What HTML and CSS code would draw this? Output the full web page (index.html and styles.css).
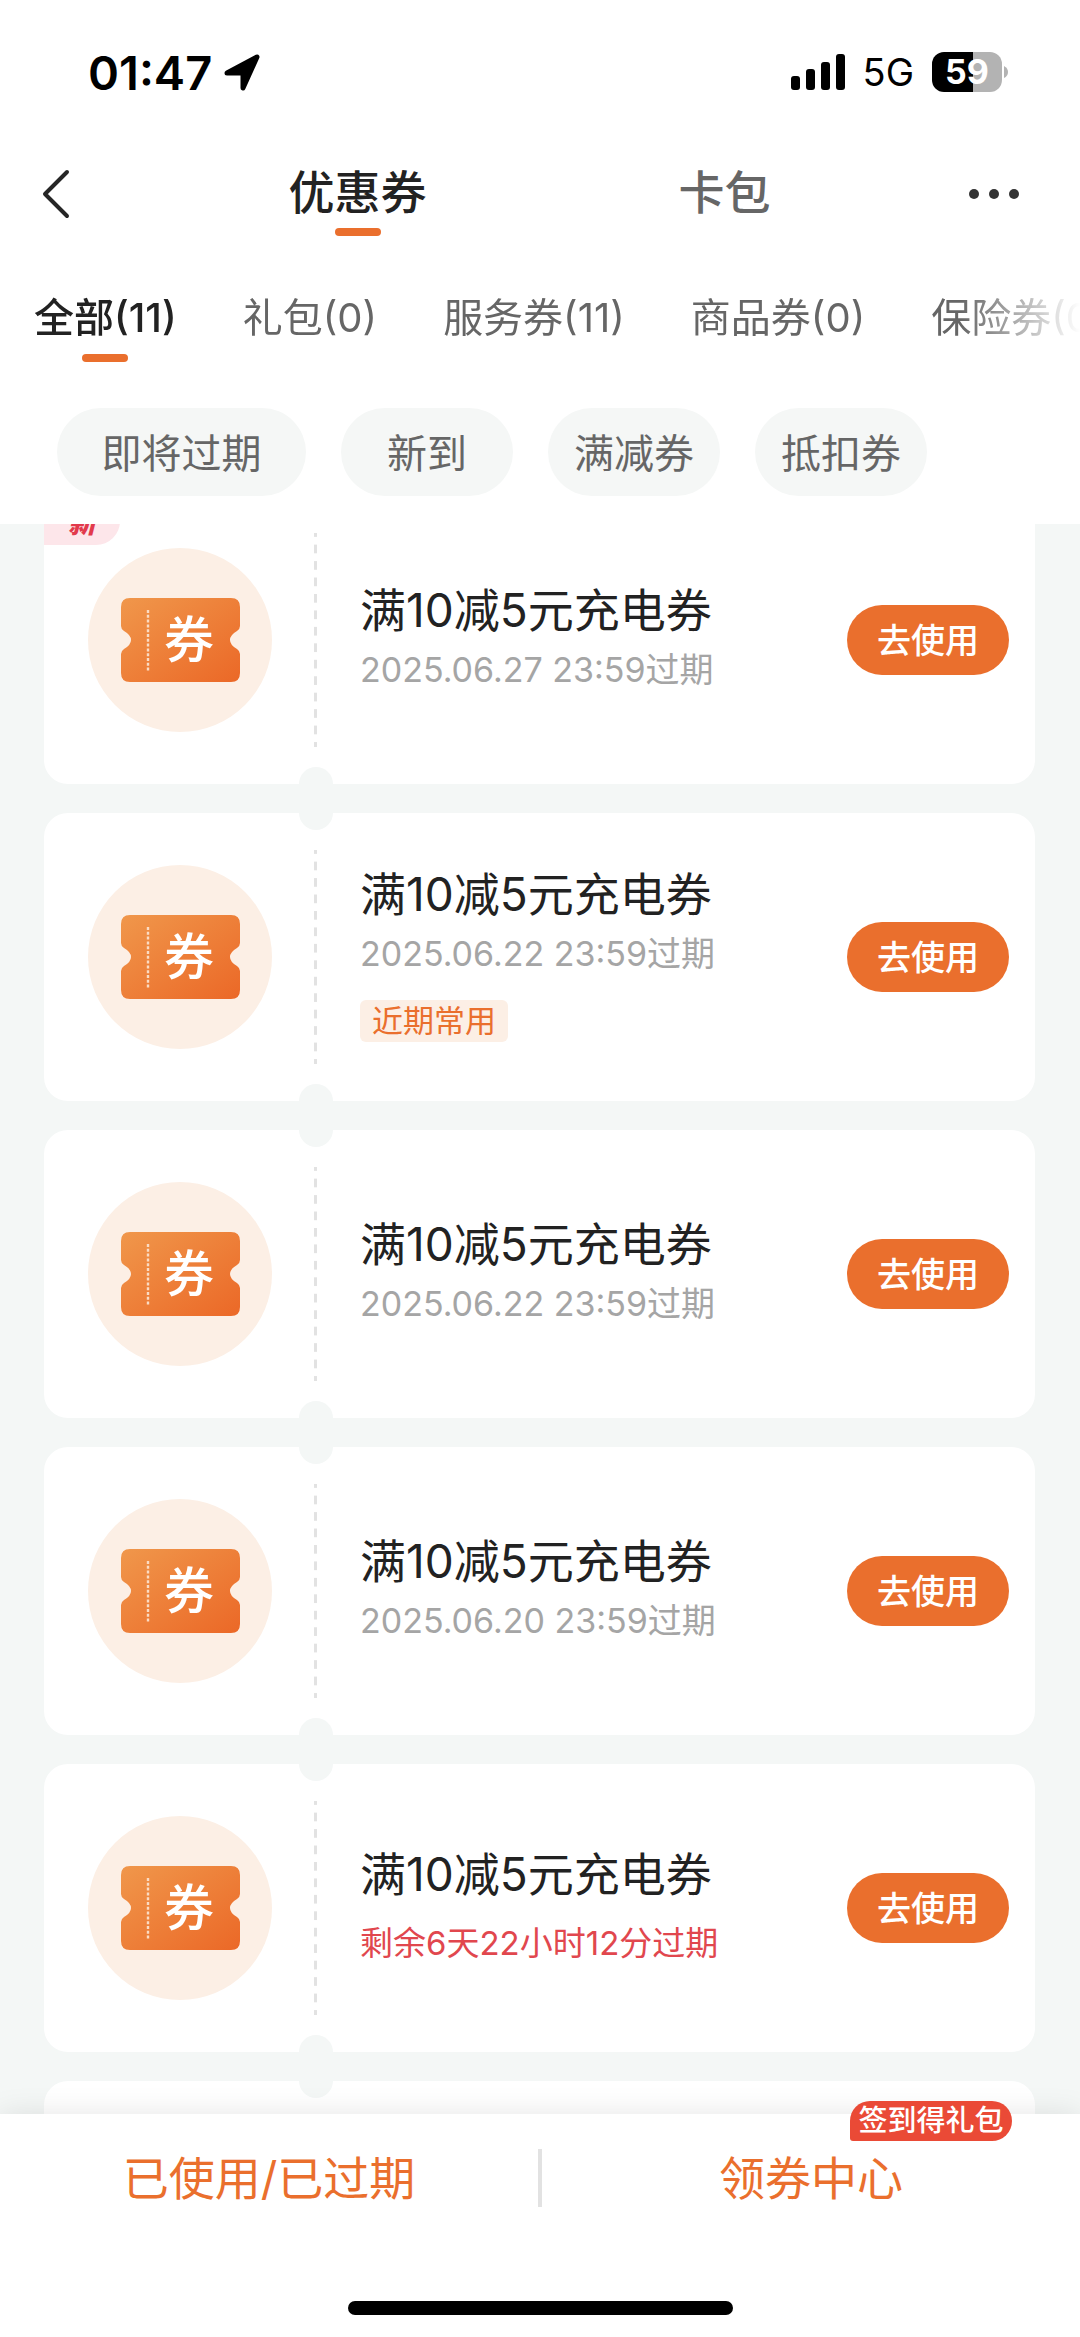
FILE: index.html
```html
<!DOCTYPE html>
<html lang="zh-CN">
<head>
<meta charset="utf-8">
<meta name="viewport" content="width=device-width, initial-scale=1">
<title>优惠券</title>
<link rel="stylesheet" href="styles.css">
</head>
<body>
<svg class="defs" aria-hidden="true">
  <defs>
    <linearGradient id="ticket-fill" x1="0" y1="0" x2="1" y2="1">
      <stop offset="0" stop-color="#f0974b"/>
      <stop offset="1" stop-color="#eb6827"/>
    </linearGradient>
    <symbol id="ticket" viewBox="0 0 119 84">
      <path fill="url(#ticket-fill)" d="M9 0H110Q119 0 119 9V28Q119 31 116 33Q109 37 109 42Q109 47 116 51Q119 53 119 56V75Q119 84 110 84H9Q0 84 0 75V56Q0 53 3 51Q10 47 10 42Q10 37 3 33Q0 31 0 28V9Q0 0 9 0Z"/>
      <path d="M27 12V73" stroke="#fbdcc4" stroke-width="2.4" stroke-dasharray="3 1.8"/>
    </symbol>
  </defs>
</svg>

<div class="status">
  <div class="status-left">
    <span class="clock">01:47</span>
    <svg width="37" height="37" viewBox="0 0 37 37" aria-hidden="true"><path d="M33 3L19 34V19H3Z" stroke="#000" stroke-width="5" stroke-linejoin="round"/></svg>
  </div>
  <div class="status-right">
    <svg width="54" height="36" viewBox="0 0 54 36" aria-hidden="true"><rect y="22" width="9" height="14" rx="3"/><rect x="15" y="15" width="9" height="21" rx="3"/><rect x="30" y="8" width="9" height="28" rx="3"/><rect x="45" width="9" height="36" rx="3"/></svg>
    <span class="network">5G</span>
    <span class="battery"><span class="battery-body">59</span><svg width="4" height="12" viewBox="0 0 4 12" aria-hidden="true"><path d="M0 0Q4 2 4 6T0 12Z" fill="#b3b3b3"/></svg></span>
  </div>
</div>

<header class="nav">
  <button class="icon-button back" aria-label="返回"><svg width="28" height="50" viewBox="0 0 28 50" aria-hidden="true"><path d="M25 3L3 25L25 47" fill="none" stroke="#262626" stroke-width="4" stroke-linecap="round" stroke-linejoin="round"/></svg></button>
  <a class="nav-tab active" href="#coupons">优惠券</a>
  <a class="nav-tab" href="#cards">卡包</a>
  <button class="icon-button more" aria-label="更多"><svg width="52" height="12" viewBox="0 0 52 12" aria-hidden="true" fill="#333"><circle cx="6" cy="6" r="5"/><circle cx="26" cy="6" r="5"/><circle cx="46" cy="6" r="5"/></svg></button>
</header>

<nav class="tabs">
  <a class="tab active" href="#all">全部(11)</a>
  <a class="tab" href="#gift">礼包(0)</a>
  <a class="tab" href="#service">服务券(11)</a>
  <a class="tab" href="#goods">商品券(0)</a>
  <a class="tab" href="#insurance">保险券(0)</a>
</nav>

<div class="filters">
  <button class="chip chip-wide">即将过期</button>
  <button class="chip">新到</button>
  <button class="chip">满减券</button>
  <button class="chip">抵扣券</button>
</div>

<main class="scroller">
  <ul class="coupons">
    <li class="coupon">
      <span class="new">新</span>
      <div class="stub"><div class="disc"><svg width="119" height="84"><use href="#ticket"/></svg><span class="glyph">券</span></div></div>
      <div class="info"><h2>满10减5元充电券</h2><p class="date">2025.06.27 23:59过期</p></div>
      <button class="use">去使用</button>
    </li>
    <li class="coupon">
      <div class="stub"><div class="disc"><svg width="119" height="84"><use href="#ticket"/></svg><span class="glyph">券</span></div></div>
      <div class="info"><h2>满10减5元充电券</h2><p class="date">2025.06.22 23:59过期</p><span class="label">近期常用</span></div>
      <button class="use">去使用</button>
    </li>
    <li class="coupon">
      <div class="stub"><div class="disc"><svg width="119" height="84"><use href="#ticket"/></svg><span class="glyph">券</span></div></div>
      <div class="info"><h2>满10减5元充电券</h2><p class="date">2025.06.22 23:59过期</p></div>
      <button class="use">去使用</button>
    </li>
    <li class="coupon">
      <div class="stub"><div class="disc"><svg width="119" height="84"><use href="#ticket"/></svg><span class="glyph">券</span></div></div>
      <div class="info"><h2>满10减5元充电券</h2><p class="date">2025.06.20 23:59过期</p></div>
      <button class="use">去使用</button>
    </li>
    <li class="coupon">
      <div class="stub"><div class="disc"><svg width="119" height="84"><use href="#ticket"/></svg><span class="glyph">券</span></div></div>
      <div class="info"><h2>满10减5元充电券</h2><p class="date urgent">剩余6天22小时12分过期</p></div>
      <button class="use">去使用</button>
    </li>
    <li class="coupon"></li>
  </ul>
</main>

<footer class="footer">
  <div class="links">
    <a class="link" href="#history">已使用/已过期</a>
    <span class="divider"></span>
    <a class="link" href="#center">领券中心<span class="badge">签到得礼包</span></a>
  </div>
  <div class="home"></div>
</footer>
</body>
</html>
```
FILE: styles.css
```css
* { box-sizing: border-box; }

body {
  margin: 0;
  height: 100vh;
  display: flex;
  flex-direction: column;
  overflow: hidden;
  background: #fff;
  color: #222;
  font-family: Inter, "Noto Sans CJK SC", sans-serif;
}

button {
  border: 0;
  padding: 0;
  background: none;
  color: inherit;
  font-family: inherit;
}

a { color: inherit; text-decoration: none; }
svg { display: block; }
.defs { position: absolute; width: 0; height: 0; }

/* Status bar */
.status {
  display: flex;
  justify-content: space-between;
  align-items: center;
  height: 144px;
  padding: 0 72px 0 88px;
  color: #000;
}
.status-left { display: flex; align-items: center; gap: 12px; }
.clock { font-size: 47px; font-weight: 600; }
.status-right { display: flex; align-items: center; gap: 18px; }
.network { font-size: 38px; }
.battery { display: flex; align-items: center; gap: 2px; }
.battery-body {
  width: 70px;
  height: 40px;
  border-radius: 12px;
  background: linear-gradient(90deg, #000 59%, #b3b3b3 59%);
  color: #fff;
  font-size: 34px;
  font-weight: 700;
  line-height: 40px;
  text-align: center;
}

/* Title bar */
.nav {
  display: grid;
  grid-template-columns: 174px 1fr 1fr 172px;
  height: 96px;
}
.icon-button { display: flex; align-items: center; padding-top: 4px; }
.back { padding-left: 42px; }
.more { padding-left: 60px; }
.nav-tab {
  position: relative;
  font-size: 46px;
  font-weight: 500;
  line-height: 96px;
  text-align: center;
  color: #666;
}
.active { color: #222; }
.active::after {
  content: "";
  position: absolute;
  left: calc(50% - 23px);
  bottom: 4px;
  width: 46px;
  height: 8px;
  border-radius: 4px;
  background: #ea6f2d;
}

/* Category tabs */
.tabs {
  display: flex;
  gap: 66px;
  height: 126px;
  padding: 30px 0 0 34px;
  overflow: hidden;
  white-space: nowrap;
  -webkit-mask-image: linear-gradient(90deg, #000 calc(100% - 120px), transparent);
  mask-image: linear-gradient(90deg, #000 calc(100% - 120px), transparent);
}
.tab {
  position: relative;
  flex: none;
  height: 96px;
  font-size: 40px;
  line-height: 96px;
  color: #666;
}
.tab.active { color: #222; font-weight: 500; }

/* Filter chips */
.filters {
  display: flex;
  gap: 35px;
  padding: 42px 57px 28px;
}
.chip {
  width: 172px;
  height: 88px;
  padding-bottom: 3px;
  border-radius: 44px;
  background: #f5f7f6;
  color: #666;
  font-size: 40px;
}
.chip-wide { width: 249px; }

/* Coupon list */
.scroller {
  flex: 1;
  min-height: 0;
  overflow: hidden;
  background: #f4f7f6;
}
.coupons {
  display: grid;
  gap: 29px;
  margin: -28px 0 0;
  padding: 0 45px 0 44px;
  list-style: none;
}
.coupon {
  position: relative;
  display: flex;
  align-items: center;
  height: 288px;
  padding-right: 26px;
  border-radius: 24px;
  overflow: hidden;
  background: #fff;
}
.coupon::before,
.coupon::after {
  content: "";
  position: absolute;
  left: 255px;
  width: 34px;
  height: 34px;
  border-radius: 50%;
  background: #f4f7f6;
}
.coupon::before { top: -17px; }
.coupon::after { bottom: -17px; }
.stub {
  flex: none;
  width: 273px;
  height: 214px;
  padding: 15px 44px;
  background: linear-gradient(#e2e2e2 4px, transparent 4px 12px, #e2e2e2 12px) right top / 3px 17px no-repeat;
  background-repeat: no-repeat round;
}
.disc {
  position: relative;
  display: grid;
  place-items: center;
  width: 184px;
  height: 184px;
  border-radius: 50%;
  background: #fcefe5;
}
.glyph {
  position: absolute;
  left: 76px;
  top: 56px;
  color: #fff;
  font-size: 50px;
  font-weight: 500;
  line-height: 72px;
}
.new {
  position: absolute;
  left: 0;
  top: 0;
  width: 76px;
  padding-top: 5px;
  border-bottom-right-radius: 24px;
  background: #fde6ea;
  color: #e23a4c;
  font-size: 28px;
  font-style: italic;
  font-weight: 900;
  line-height: 44px;
  text-align: center;
}
.info { flex: 1; padding-left: 43px; }
.info h2 {
  margin: 0;
  font-size: 46px;
  font-weight: 400;
  line-height: 60px;
  color: #222;
}
.date {
  margin: 0;
  font-size: 34px;
  line-height: 60px;
  color: #a5a5a5;
}
.urgent { margin-top: 9px; font-size: 33px; color: #e1474e; }
.label {
  display: block;
  width: 148px;
  margin: 16px 0 9px;
  border-radius: 6px;
  background: #fcefe5;
  color: #ea6f2d;
  font-size: 31px;
  line-height: 42px;
  text-align: center;
}
.use {
  width: 162px;
  height: 70px;
  padding-bottom: 3px;
  border-radius: 35px;
  background: #ea6f2d;
  color: #fff;
  font-size: 34px;
  font-weight: 500;
}

/* Bottom bar */
.footer {
  position: relative;
  padding-bottom: 22px;
  background: #fff;
  box-shadow: 0 0 28px rgba(0, 0, 0, 0.1);
}
.links { display: flex; align-items: center; height: 128px; }
.link {
  position: relative;
  flex: 1;
  color: #ea6f2d;
  font-size: 46px;
  line-height: 128px;
  text-align: center;
}
.divider { width: 4px; height: 58px; background: #e2e2e2; }
.badge {
  position: absolute;
  right: 68px;
  top: -13px;
  width: 162px;
  border-radius: 20px 20px 20px 3px;
  background: #ea4a36;
  color: #fff;
  font-size: 29px;
  font-weight: 500;
  line-height: 40px;
}
.home {
  width: 385px;
  height: 14px;
  margin: 59px auto 0;
  border-radius: 7px;
  background: #000;
}
```
